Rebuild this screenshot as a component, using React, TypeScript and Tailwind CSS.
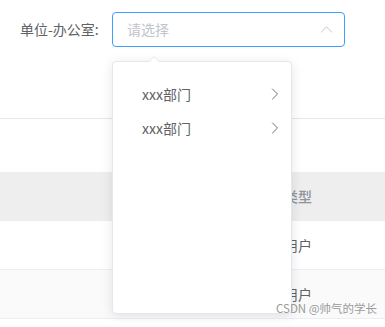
import { ChevronUp, ChevronRight } from 'lucide-react';

const font = { fontFamily: '"Noto Sans CJK SC", "Noto Sans", sans-serif' };

export default function App() {
  const rows = [
    { type: '用户', bg: 'bg-white' },
    { type: '用户', bg: 'bg-[#fafafa]' },
  ];

  return (
    <div className="relative w-[385px] h-[327px] overflow-hidden bg-white text-[14px]" style={font}>
      {/* Form area */}
      <div className="h-[119px] border-b border-[#e6e7eb]">
        <div className="flex items-center pt-[12px] pl-[20px]">
          <label className="w-[92px] text-[#606266] leading-[35px]">单位-办公室:</label>
          <div className="flex items-center justify-between w-[233px] h-[35px] border border-[#409eff] rounded-[4px] pl-[14px] pr-[7px]">
            <span className="text-[#c0c4cc]">请选择</span>
            <ChevronUp size={21} strokeWidth={1.1} className="text-[#c0c4cc]" />
          </div>
        </div>
      </div>

      {/* Table */}
      <div className="mt-[53px]">
        <div className="flex h-[49px] bg-[#eeeeef] items-center">
          <div className="w-[252px]" />
          <div className="pl-[32px] text-[#909399] font-medium">类型</div>
        </div>
        {rows.map((r, i) => (
          <div key={i} className={`flex h-[49px] items-center border-b border-[#ebeef5] ${r.bg}`}>
            <div className="w-[252px] h-full" />
            <div className="pl-[32px] leading-none text-[#606266]">{r.type}</div>
          </div>
        ))}
      </div>

      {/* Cascader dropdown */}
      <div className="absolute left-[112px] top-[61px] w-[180px] h-[253px] bg-white border border-[#e4e7ed] rounded-[4px] shadow-[0_2px_12px_rgba(0,0,0,0.1)]">
        <div className="absolute -top-[6px] left-[35px] w-0 h-0 border-l-[6px] border-r-[6px] border-b-[6px] border-l-transparent border-r-transparent border-b-[#e4e7ed]" />
        <div className="absolute -top-[5px] left-[36px] w-0 h-0 border-l-[5px] border-r-[5px] border-b-[5px] border-l-transparent border-r-transparent border-b-white" />
        <ul className="pt-[15px]">
          {['xxx部门', 'xxx部门'].map((t, i) => (
            <li key={i} className="flex items-center justify-between h-[34px] pl-[29px] pr-[6px] text-[#606266]">
              <span>{t}</span>
              <ChevronRight size={20} strokeWidth={1.1} className="text-[#606266]" />
            </li>
          ))}
        </ul>
      </div>

      {/* Watermark */}
      <div className="absolute left-[276px] top-[303px] leading-none text-[11.5px] text-[#9a9a9a]">CSDN @帅气的学长</div>
    </div>
  );
}
